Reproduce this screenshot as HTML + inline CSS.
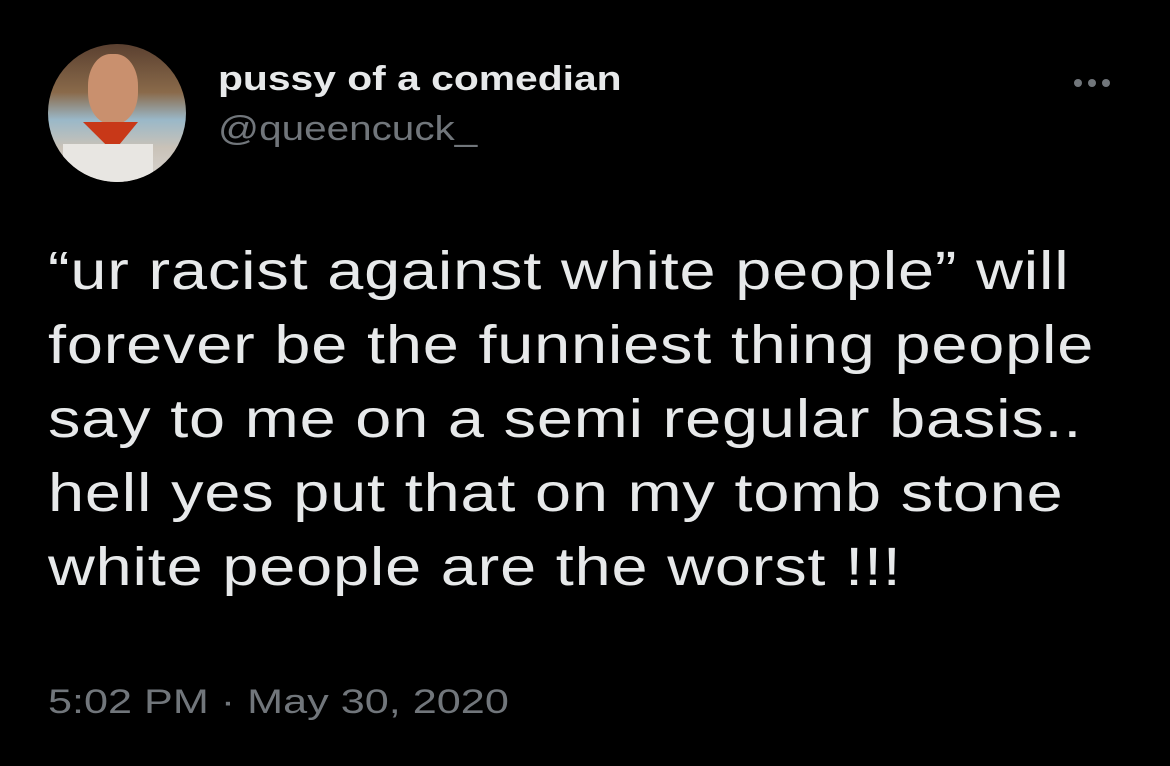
<!DOCTYPE html>
<html><head><style>
body{margin:0;width:1170px;height:766px;background:#000;overflow:hidden;font-family:"Liberation Sans",Arial,sans-serif;position:relative}
.av{position:absolute;left:48px;top:44px;width:138px;height:138px;border-radius:50%;overflow:hidden;background:linear-gradient(180deg,#5a4030 0%,#8a6a4a 35%,#9ab8c8 55%,#c9c2b8 75%,#d8d4cf 100%)}
.name{position:absolute;left:218px;top:60px;font-size:34px;font-weight:bold;color:#e7e9ea;transform:scaleX(1.2);transform-origin:left}
.handle{position:absolute;left:218px;top:110px;font-size:34px;color:#71767b;transform:scaleX(1.19);transform-origin:left}
.dots{position:absolute;left:1074px;top:74px}
.dots i{display:inline-block;width:8px;height:8px;border-radius:50%;background:#71767b;margin-right:6px}
.body{position:absolute;left:48px;top:234px;font-size:54px;line-height:74px;color:#e7e9ea;letter-spacing:0.7px;transform:scaleX(1.2);transform-origin:left;white-space:nowrap}
.time{position:absolute;left:48px;top:683px;font-size:34px;color:#71767b;transform:scaleX(1.27);transform-origin:left}
</style></head><body>
<div class="av">
<div style="position:absolute;left:40px;top:10px;width:50px;height:70px;border-radius:45%;background:#c9906e"></div>
<div style="position:absolute;left:35px;top:78px;width:55px;height:30px;background:#c83818;clip-path:polygon(0 0,100% 0,55% 100%)"></div>
<div style="position:absolute;left:15px;top:100px;width:90px;height:40px;background:#e8e6e2"></div>
</div>
<div class="name">pussy of a comedian</div>
<div class="handle">@queencuck_</div>
<div class="dots"><i></i><i></i><i></i></div>
<div class="body">“ur racist against white people” will<br>forever be the funniest thing people<br>say to me on a semi regular basis..<br>hell yes put that on my tomb stone<br>white people are the worst !!!</div>
<div class="time">5:02 PM · May 30, 2020</div>
</body></html>
